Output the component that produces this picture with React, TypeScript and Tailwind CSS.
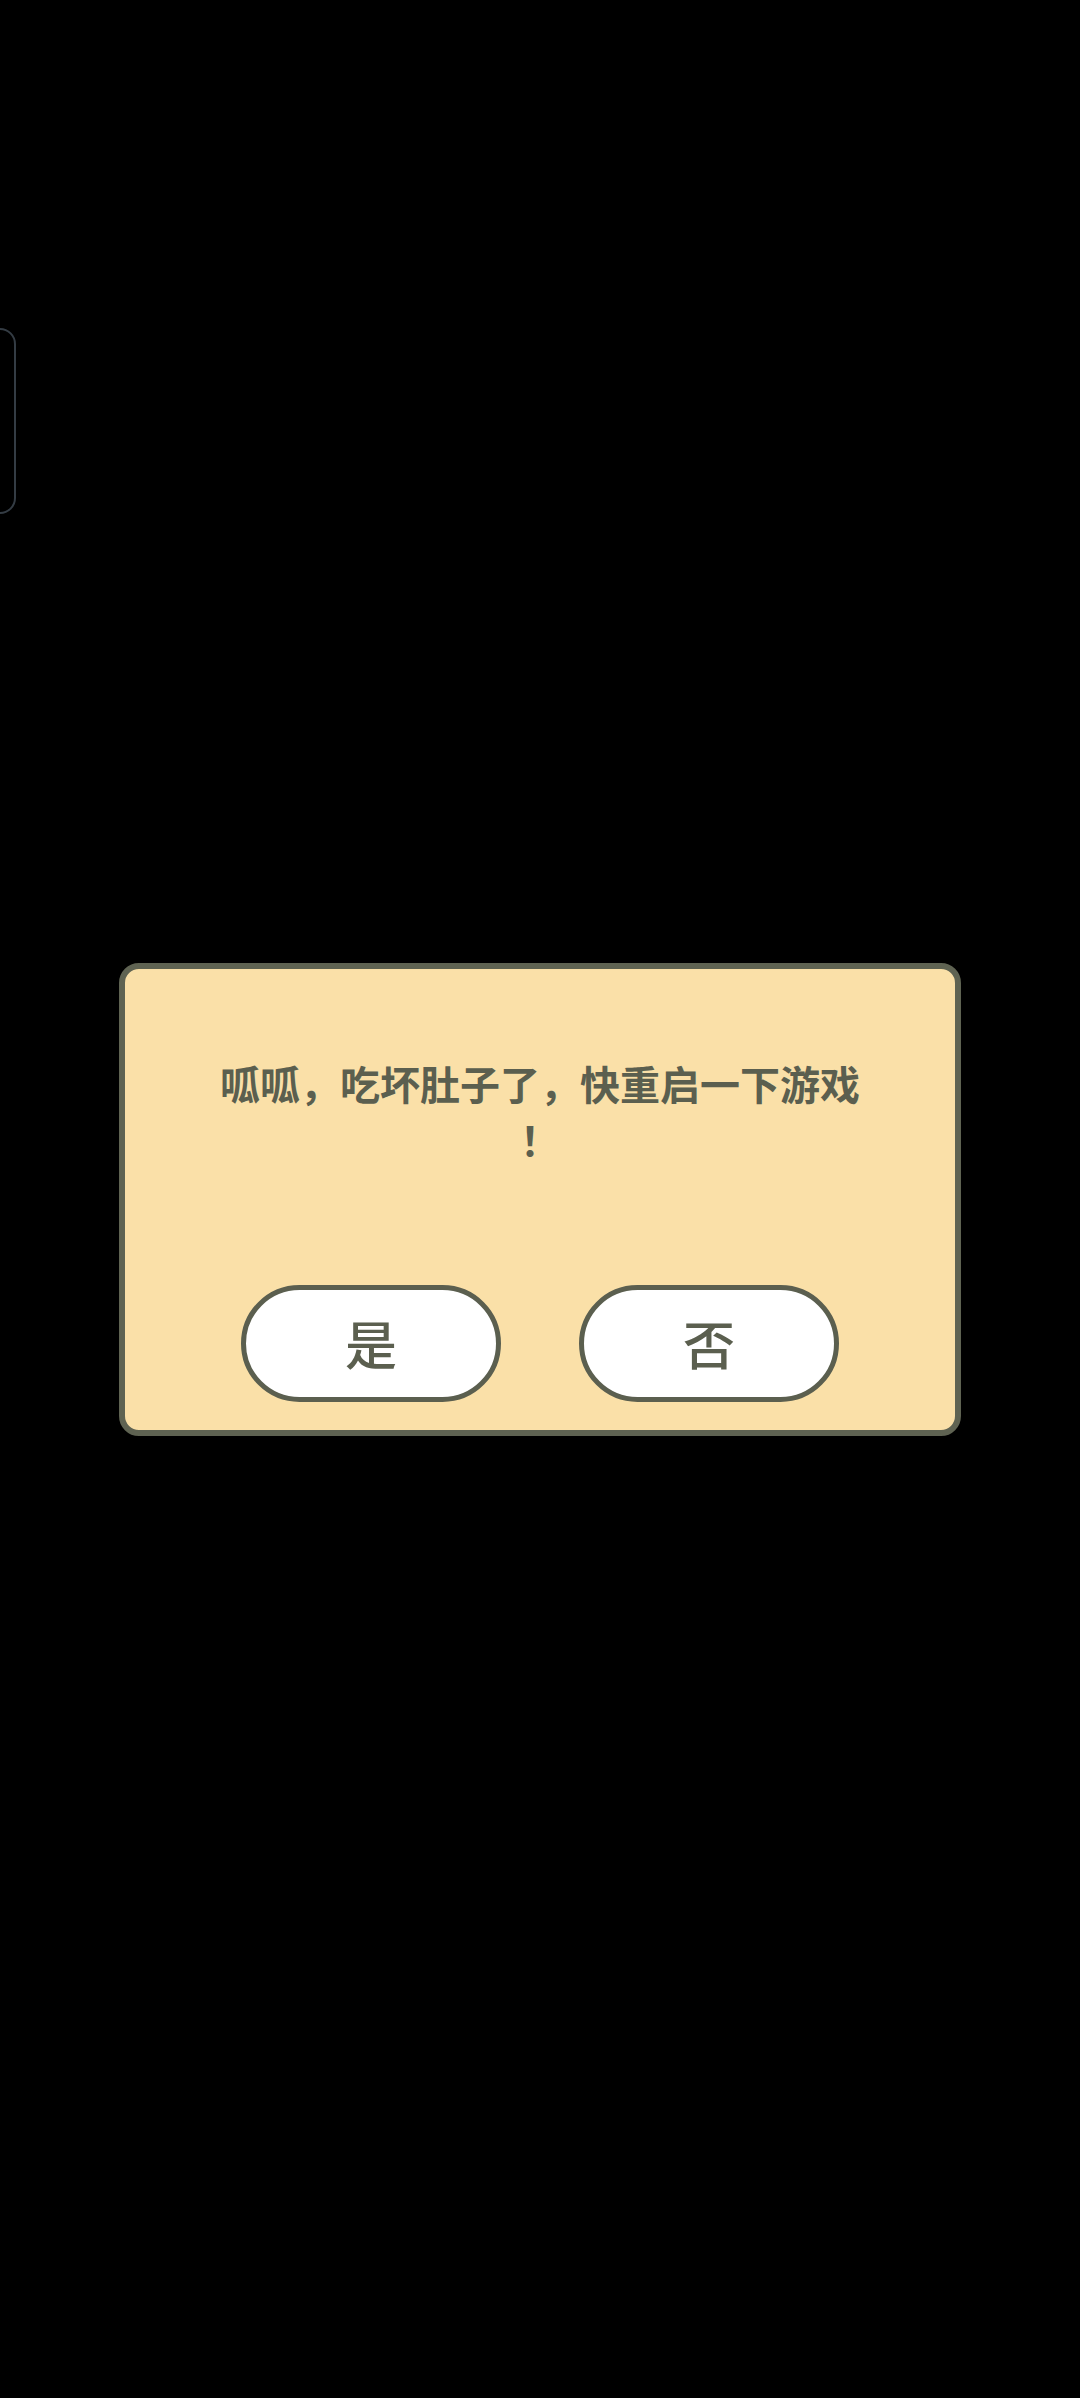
import React from "react";

export default function App() {
  return (
    <div className="relative h-[2398px] w-[1080px] overflow-hidden bg-black flex items-center justify-center">
      {/* side handle peeking in from the left edge */}
      <div className="absolute left-[-24px] top-[328px] h-[186px] w-[40px] rounded-[16px] border-2 border-[#343c44]" />

      <div
        className="flex h-[473px] w-[842px] flex-col items-center rounded-[20px] border-[6px] border-[#5f6352] bg-[#fae0a8] pt-[86px] pb-[28px]"
        style={{ fontFamily: '"Noto Sans CJK SC", "Noto Sans", sans-serif' }}
      >
        <p className="w-[720px] text-center text-[40px] font-bold leading-[56px] text-[#5b5f4f]">
          呱呱，吃坏肚子了，快重启一下游戏
          <br />
          ！
        </p>

        <div className="mt-auto flex gap-[78px]">
          <button className="flex h-[117px] w-[260px] items-center justify-center rounded-full border-[5px] border-[#5b5f4f] bg-white text-[52px] font-medium text-[#5b5f4f]">
            是
          </button>
          <button className="flex h-[117px] w-[260px] items-center justify-center rounded-full border-[5px] border-[#5b5f4f] bg-white text-[52px] font-medium text-[#5b5f4f]">
            否
          </button>
        </div>
      </div>
    </div>
  );
}
